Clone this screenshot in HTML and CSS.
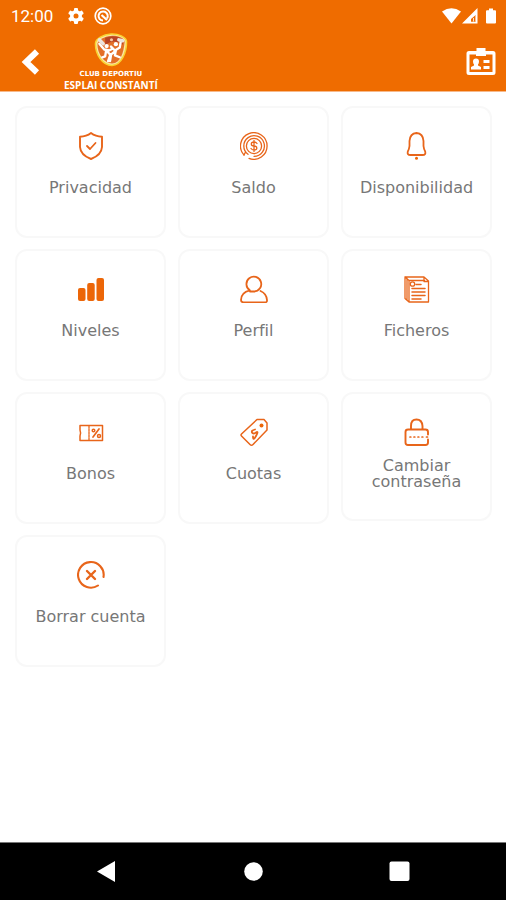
FILE: index.html
```html
<!DOCTYPE html>
<html lang="es">
<head>
<meta charset="utf-8">
<meta name="viewport" content="width=device-width, initial-scale=1">
<title>Club Deportiu Esplai Constantí</title>
<link rel="stylesheet" href="styles.css">
</head>
<body>
<header class="header">
  <div class="status">
    <span class="clock">12:00</span>
    <svg class="status-icon" width="18" height="18" viewBox="0 0 18 18" aria-hidden="true">
      <g fill="#fff"><circle cx="9" cy="9" r="6"/><rect x="7" y="1" width="4" height="16" rx="1"/><rect x="7" y="1" width="4" height="16" rx="1" transform="rotate(60 9 9)"/><rect x="7" y="1" width="4" height="16" rx="1" transform="rotate(120 9 9)"/></g>
      <circle cx="9" cy="9" r="2.5" fill="#ef6c00"/>
    </svg>
    <svg class="status-icon" width="18" height="18" viewBox="0 0 18 18" fill="none" stroke="#fff" aria-hidden="true">
      <circle cx="9" cy="9" r="7.800" stroke-width="1.700"/><path d="M13 11.500A4.600 4.600 0 1 0 9 13.600" stroke-width="2"/><path d="M7.500 8l5.500 5" stroke-width="2.200"/>
    </svg>
    <svg class="status-right" width="56" height="18" viewBox="0 0 56 18" fill="#fff" aria-hidden="true">
      <path d="M0 4.500Q9.500-2 19 4.500L9.500 16.500z"/>
      <path fill-rule="evenodd" d="M20 16.500L35.500 1v15.500zM29 14.800h4.700V8L29 12z"/>
      <path d="M34 8.500v6M31.500 11v3.500" stroke="#fff" stroke-width=".8"/>
      <path d="M47 1.500h4v1.800h2q1 0 1 1v11.200q0 1-1 1h-8q-1 0-1-1V4.300q0-1 1-1h2z"/>
    </svg>
  </div>
  <div class="appbar">
    <button class="icon-button" type="button" aria-label="Atrás">
      <svg width="20" height="28" viewBox="0 0 20 28" aria-hidden="true"><path d="M17 3.500L6 14l11 10.500" fill="none" stroke="#fff" stroke-width="6"/></svg>
    </button>
    <div class="brand">
      <svg width="36" height="34" viewBox="0 0 36 35" aria-hidden="true">
        <path d="M18 1C25 .5 34 4 34 9C34 20 29 33 19 33.500C9 33 2 22 2 11C2 6 10 1.500 18 1z" fill="#fbe6a4" stroke="#f8d333" stroke-width="1.600"/>
        <path d="M18 3C25 2.500 32 5 32 9.500C31 20 28 31 19 31.500C11 31 4 22 4 11C5 7 11 3.500 18 3z" fill="#e36f28"/>
        <path d="M12 5Q22 1 31 7L30 12Q20 5 12 13z" fill="#b84325"/>
        <g fill="none" stroke="#fff" stroke-linecap="round" stroke-linejoin="round">
          <path d="M6 11l5 6l5 1l4-2M13 18l-1 6l-3 1M14 19l4 4l-1 6M28 9l-1 6l-5 3l-4-4M23 18l-1 5l5 2M22 19l-5 4l-2 6" stroke-width="2.400"/>
          <path d="M6 7l4 4M26 7l4 1" stroke-width="3.500" stroke="#ece4df"/>
        </g>
        <circle cx="13.500" cy="13.500" r="2.200" fill="#fff"/><circle cx="23" cy="11.500" r="2.200" fill="#fff"/><circle cx="18.500" cy="7" r="1.600" fill="#f6c7a0"/>
      </svg>
      <span class="brand-small">CLUB DEPORTIU</span>
      <span class="brand-name">ESPLAI CONSTANTÍ</span>
    </div>
    <button class="icon-button push" type="button" aria-label="Carnet">
      <svg width="30" height="28" viewBox="0 0 30 28" aria-hidden="true">
        <path d="M10.500 0h9v3H27q2.500 0 2.500 2.500v19Q29.500 27 27 27H3Q.5 27 .5 24.500v-19Q.5 3 3 3h7.500zM3.500 6.500V24h23V6.500H20V8H10V6.500z" fill="#fff" fill-rule="evenodd"/>
        <path d="M10 10.500q3 0 3 3q0 2-1 3v1l3 1.500v2.500H5V19l3-1.500v-1q-1-1-1-3q0-3 3-3zM17.500 12h6v3h-6zM17.500 18h6v3h-6z" fill="#fff"/>
      </svg>
    </button>
  </div>
</header>

<main class="menu">
  <a class="card" href="#privacidad">
    <svg class="icon" viewBox="0 0 28 28" aria-hidden="true"><path d="M14 1Q18.500 4.500 25 4.700V15Q24.500 23 14 27Q3.500 23 3 15V4.700Q9.500 4.500 14 1z" stroke-width="1.900"/><path d="M10 14l3 3l5.500-6" stroke-width="1.800"/></svg>
    <span class="label">Privacidad</span>
  </a>
  <a class="card" href="#saldo">
    <svg class="icon" viewBox="0 0 28 28" aria-hidden="true"><g stroke-width="1.300"><path d="M4 23A13.300 13.300 0 1 1 9 26.400"/><path d="M8 22.300A10.300 10.300 0 1 1 14 24.300M5.500 20l-1.500 3"/><circle cx="14" cy="14" r="7.600"/><path d="M17 11.500Q16 10 14 10Q11.300 10 11.300 12T14 14T16.800 16T14 18Q12 18 11 16.500M14 8.500v11"/></g></svg>
    <span class="label">Saldo</span>
  </a>
  <a class="card" href="#disponibilidad">
    <svg class="icon" viewBox="0 0 28 28" aria-hidden="true"><path d="M13.500 1Q20 1.500 20.500 9V14Q20.800 17 22.200 19.500Q23.200 23 19.500 23H7.500Q3.800 23 4.800 19.500Q6.200 17 6.500 14V9Q7 1.500 13.500 1z" stroke-width="1.800"/><circle class="solid" cx="13.500" cy="26.300" r="1.500"/></svg>
    <span class="label">Disponibilidad</span>
  </a>
  <a class="card" href="#niveles">
    <svg class="icon" viewBox="0 0 28 28" aria-hidden="true"><g class="solid"><rect x="1" y="13" width="7.500" height="13" rx="2"/><rect x="10.200" y="8" width="7.500" height="18" rx="2"/><rect x="19.500" y="3" width="7.500" height="23" rx="2"/></g></svg>
    <span class="label">Niveles</span>
  </a>
  <a class="card" href="#perfil">
    <svg class="icon" viewBox="0 0 28 28" aria-hidden="true"><g stroke-width="1.800"><path d="M10 16.500H14A7.400 7.400 0 1 0 9.800 15.300Q1 17.500 1 25Q1 27.300 3.500 27.300H25Q27.300 27.300 27 25Q26.500 18.500 20.500 16"/></g></svg>
    <span class="label">Perfil</span>
  </a>
  <a class="card" href="#ficheros">
    <svg class="icon" viewBox="0 0 28 28" aria-hidden="true"><g stroke-width="1.300"><path d="M6 5.500V27H25.500V6L21 2H2V23.500L6 27M4 3.500V25M2 2L6 5.500H21.500M21 2V6.500H25.500"/><circle cx="9.500" cy="9" r="2.200"/><path d="M13 9.500h5M9 13.500h13M9 17h13M9 20.500h13M9 24h9" stroke-width="1.500"/></g></svg>
    <span class="label">Ficheros</span>
  </a>
  <a class="card" href="#bonos">
    <svg class="icon" viewBox="0 0 28 28" aria-hidden="true"><path d="M3 7.500H25.500V22.500H3V18Q4.200 15 3 12z" stroke-width="1.500"/><path d="M12 8V22" stroke-width="1.300" stroke-dasharray="2 1"/><path d="M16 19l6-8" stroke-width="1.700"/><g stroke-width="1.500"><circle cx="16.500" cy="12.500" r="1.300"/><circle cx="22" cy="18" r="1.500"/></g></svg>
    <span class="label">Bonos</span>
  </a>
  <a class="card" href="#cuotas">
    <svg class="icon" viewBox="0 0 28 28" aria-hidden="true"><path d="M17 1.500H24L27 5V12L13 26.500Q11.500 28 10 26.500L1.500 18Q.5 17 1.500 16z" stroke-width="1.500"/><circle class="solid" cx="21.500" cy="7.500" r="2"/><path d="M15 11.500Q11 12.500 12 14.500T16 14.500T16 18T13 18.500" stroke-width="1.800"/></svg>
    <span class="label">Cuotas</span>
  </a>
  <a class="card card-short" href="#contrasena">
    <svg class="icon" viewBox="0 0 28 28" aria-hidden="true"><g stroke-width="1.900"><path d="M8 11V8Q8 1.500 13.500 1.500T19.500 8V11"/><path d="M25 16.500V14Q25 11.500 22.500 11.500H5Q2.500 11.500 2.500 14V24.500Q2.500 27 5 27H22.500Q25 27 25 24.500V21.500"/></g><path d="M7 19h.8M11 19h.8M15 19h.8M19 19h.8M23.500 19h1" stroke-width="1.700"/></svg>
    <span class="label">Cambiar contraseña</span>
  </a>
  <a class="card" href="#borrar-cuenta">
    <svg class="icon" viewBox="0 0 28 28" aria-hidden="true"><path d="M21 24.500A12.800 12.800 0 1 1 26.500 16" stroke-width="2.100"/><path d="M10 10l8 8M18 10l-8 8" stroke-width="2.400"/></svg>
    <span class="label">Borrar cuenta</span>
  </a>
</main>

<nav class="system-nav" aria-label="Sistema">
  <button class="icon-button" type="button" aria-label="Volver"><svg width="22" height="22" viewBox="0 0 22 22" aria-hidden="true"><path d="M1 10.500L19 0V21z" fill="#fff"/></svg></button>
  <button class="icon-button" type="button" aria-label="Inicio"><svg width="22" height="22" viewBox="0 0 22 22" aria-hidden="true"><circle cx="11.500" cy="10.500" r="9.300" fill="#fff"/></svg></button>
  <button class="icon-button" type="button" aria-label="Recientes"><svg width="22" height="22" viewBox="0 0 22 22" aria-hidden="true"><rect x="1.500" y=".5" width="20" height="19.500" rx="2" fill="#fff"/></svg></button>
</nav>
</body>
</html>
```
FILE: styles.css
```css
* {
  box-sizing: border-box;
}

body {
  margin: 0;
  min-height: 100vh;
  display: flex;
  flex-direction: column;
  background: #fff;
  font-family: "DejaVu Sans", sans-serif;
}

svg {
  display: block;
}

.header {
  background: #ef6c00;
  color: #fff;
  border-bottom: 1px solid #f7b98a;
}

.status {
  height: 32px;
  display: flex;
  align-items: center;
  gap: 9px;
  padding: 0 8px 0 11px;
}

.clock {
  font: 17px/20px Roboto, sans-serif;
  margin-right: 5px;
}

.status-right {
  margin-left: auto;
}

.appbar {
  display: flex;
  align-items: center;
  padding: 1px 10px 0 20px;
}

.icon-button {
  padding: 0;
  border: 0;
  background: none;
  cursor: pointer;
}

.push {
  margin-left: auto;
}

.brand {
  display: flex;
  flex-direction: column;
  align-items: center;
  margin-left: 24px;
  white-space: nowrap;
}

.brand-small {
  margin-top: 3px;
  font-size: 7px;
  line-height: 8px;
  font-weight: 700;
}

.brand-name {
  margin-top: 1px;
  font: 700 10px/12px "Open Sans", sans-serif;
}

.menu {
  flex: 1;
  display: grid;
  grid-template-columns: repeat(3, 1fr);
  align-content: start;
  align-items: start;
  gap: 11px 12px;
  padding: 14px 14px 14px 15px;
}

.card {
  min-height: 132px;
  display: flex;
  flex-direction: column;
  align-items: center;
  gap: 12px;
  padding: 24px 16px 16px;
  border: 2px solid #f8f8f8;
  border-radius: 12px;
  color: #777;
  text-align: center;
  text-decoration: none;
}

.card-short {
  min-height: 129px;
}

.icon {
  width: 28px;
  height: 28px;
  fill: none;
  stroke: #e8651a;
  stroke-linecap: round;
  stroke-linejoin: round;
}

.solid {
  fill: #ec6608;
  stroke: none;
}

.label {
  min-height: 32px;
  display: flex;
  align-items: center;
  font-size: 16px;
  line-height: 16px;
}

.system-nav {
  height: 58px;
  display: flex;
  align-items: center;
  justify-content: space-between;
  padding: 0 19%;
  background: #000;
  border-top: 1px solid #777;
}
```
